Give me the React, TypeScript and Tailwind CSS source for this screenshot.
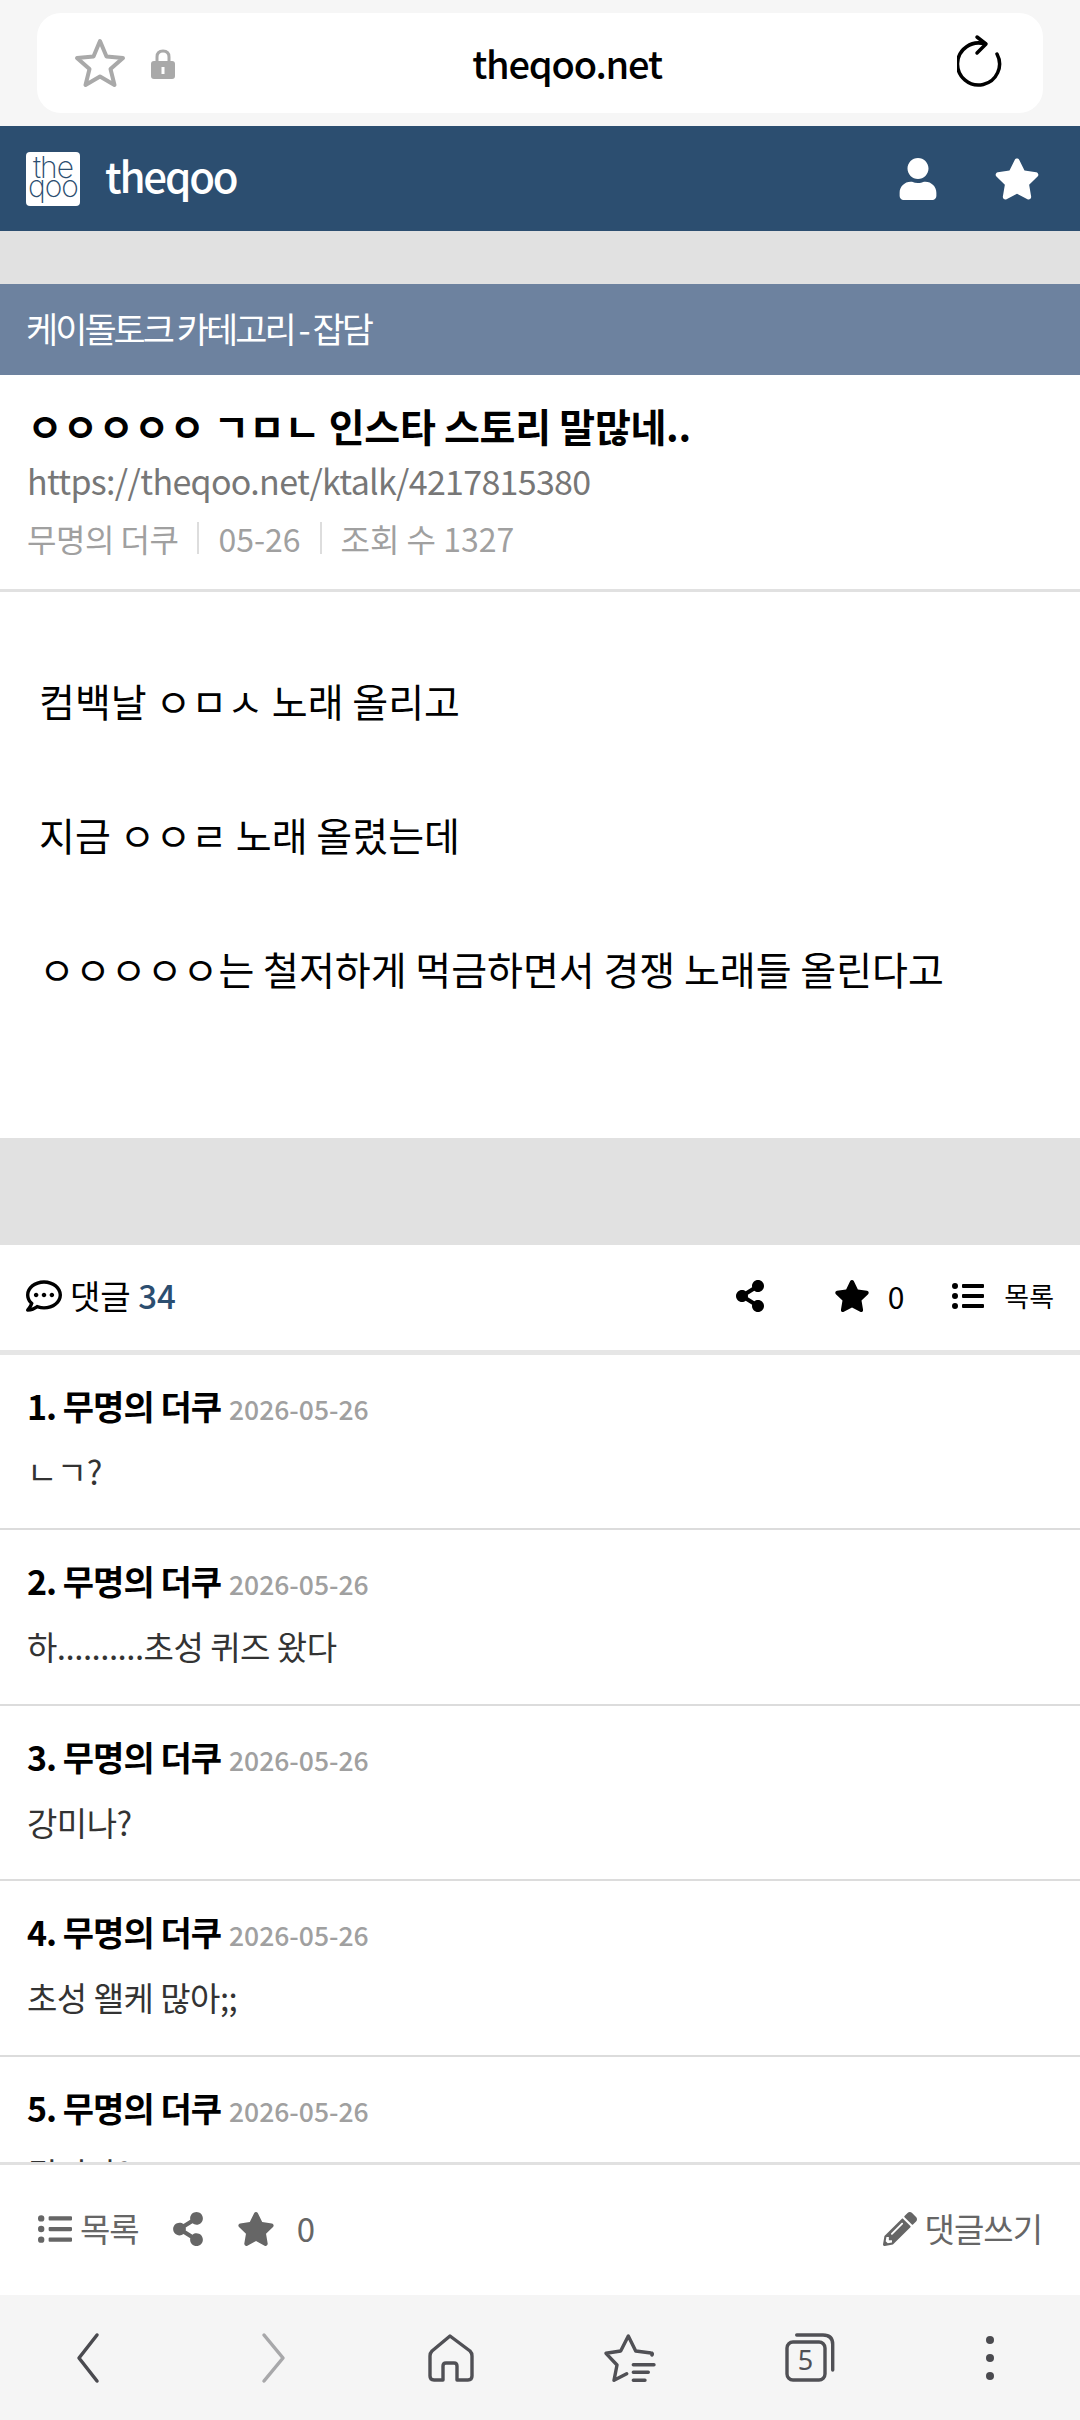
import { FaListUl, FaPencilAlt, FaRegCommentDots, FaShareAlt, FaStar, FaUser } from "react-icons/fa";

const font = "font-['Noto_Sans_CJK_KR','Noto_Sans',sans-serif]";

const comments = [
  { no: 1, body: "ㄴㄱ?" },
  { no: 2, body: "하..........초성 퀴즈 왔다" },
  { no: 3, body: "강미나?" },
  { no: 4, body: "초성 왤케 많아;;" },
  { no: 5, body: "권미나?" },
];

const TheqooLogo = () => (
  <svg width="54" height="54" viewBox="0 0 54 54">
    <rect width="54" height="54" rx="4" fill="#fff" />
    <g fontFamily="Inter, sans-serif" fontWeight="200" fontSize="30" fill="#2c4e70" textAnchor="middle">
      <text x="27" y="26" letterSpacing="-1">the</text>
      <text x="27" y="45" letterSpacing="-1">qoo</text>
    </g>
  </svg>
);

const BrowserNav = () => (
  <nav className="grid h-[125px] shrink-0 grid-cols-6 place-items-center bg-[#f5f5f5]">
    <svg width="32" height="52" viewBox="0 0 32 52" fill="none" stroke="#4a4a4f" strokeWidth="3.5" strokeLinecap="round" strokeLinejoin="round">
      <path d="M23 3 L5 26 L23 49" />
    </svg>
    <svg className="ml-[6px]" width="32" height="52" viewBox="0 0 32 52" fill="none" stroke="#a8a8aa" strokeWidth="3.5" strokeLinecap="round" strokeLinejoin="round">
      <path d="M7 3 L26 26 L7 49" />
    </svg>
    <svg className="ml-[2px]" width="46" height="48" viewBox="28 13 46 48" fill="none" stroke="#505055" strokeWidth="3.4" strokeLinecap="round" strokeLinejoin="round">
      <path d="M50 15 L70 30 Q72 32 72 35 V55 Q72 59 68 59 H57 V45 Q57 42 54 42 H46 Q43 42 43 45 V59 H34 Q30 59 30 55 V35 Q30 32 32 30 Z" />
    </svg>
    <svg width="52" height="48" viewBox="205 13 52 48" fill="none" stroke="#505055" strokeWidth="3.4" strokeLinecap="round" strokeLinejoin="round">
      <path d="M253 34 Q254 32 252 32 L236.7 30 L229.3 15 L221.7 30 L207 32.3 L218 44 L215 59.3 L227.7 52.7" />
      <path d="M234.3 43.7 H255 M234.3 51.3 H249.3 M234.3 59.3 H246" />
    </svg>
    <svg width="52" height="50" viewBox="4 12 52 50" fill="none" stroke="#505055" strokeWidth="3.4" strokeLinecap="round">
      <path d="M16.7 14 H43 Q52.7 14 52.7 23.3 V49" />
      <rect x="7" y="21" width="38" height="38" rx="6" />
      <text x="25.5" y="49" textAnchor="middle" fontSize="27" fontFamily="Noto Sans, sans-serif" fill="#505055" stroke="none">5</text>
    </svg>
    <div className="flex h-[44px] flex-col justify-between">
      <span className="h-[8px] w-[8px] rounded-full bg-[#4a4a4f]" />
      <span className="h-[8px] w-[8px] rounded-full bg-[#4a4a4f]" />
      <span className="h-[8px] w-[8px] rounded-full bg-[#4a4a4f]" />
    </div>
  </nav>
);

export default function App() {
  return (
    <div className={`${font} flex h-[2420px] w-[1080px] flex-col overflow-hidden bg-white`}>
      {/* browser address bar */}
      <div className="flex h-[126px] shrink-0 items-start bg-[#f6f6f6] px-[37px] pt-[13px]">
        <div className="relative flex h-[100px] w-full items-center justify-center rounded-[24px] bg-white pl-[54px]">
          <svg className="absolute left-[37px] top-[25px]" width="52" height="50" viewBox="0 0 52 50" fill="none" stroke="#a9a9a9" strokeWidth="4" strokeLinejoin="round">
            <path d="M26 3 L32.5 18.5 L49 20 L36.5 31 L40.5 47 L26 38.5 L11.5 47 L15.5 31 L3 20 L19.5 18.5 Z" />
          </svg>
          <svg className="absolute left-[113px] top-[36px]" width="26" height="30" viewBox="0 0 26 30" fill="none">
            <path d="M7 13 V8 Q7 2 13 2 Q19 2 19 8 V13" stroke="#a9a9a9" strokeWidth="3" />
            <rect x="1" y="12" width="24" height="18" rx="3" fill="#a9a9a9" />
            <rect x="11.5" y="18" width="3" height="7" fill="#fff" />
          </svg>
          <span className="text-[38px] font-medium leading-none tracking-[-1.2px] text-black">theqoo.net</span>
          <svg className="absolute right-[40px] top-[21px]" width="46" height="54" viewBox="0 0 46 54" fill="none" stroke="#000" strokeWidth="3.5" strokeLinecap="round" strokeLinejoin="round">
            <path d="M40 20 A21 21 0 1 1 28 10" />
            <path d="M20 3 L29 10 L20 19" />
          </svg>
        </div>
      </div>

      {/* site header */}
      <header className="flex h-[105px] shrink-0 items-center justify-between bg-[#2c4e70] pl-[26px] pr-[40px]">
        <div className="flex items-center gap-[25px]">
          <TheqooLogo />
          <span className="pb-[8px] text-[42px] font-medium leading-none tracking-[-2.2px] text-white">theqoo</span>
        </div>
        <div className="flex items-center gap-[56px] text-white">
          <FaUser className="h-[42px] w-[40px]" />
          <FaStar className="h-[44px] w-[46px]" />
        </div>
      </header>

      <div className="h-[53px] shrink-0 bg-[#e1e1e1]" />

      <main className="min-h-0 flex-1 overflow-hidden">
        <div className="flex h-[91px] items-center bg-[#6d829f] px-[26px] pb-[2px] text-[35px] tracking-[-3px] text-white">
          케이돌토크 카테고리 - 잡담
        </div>

        <section className="h-[217px] border-b-[3px] border-[#e1e1e1] px-[27px] pt-[23px]">
          <h1 className="text-[39px] font-bold leading-[54px] tracking-[-0.3px] text-black">ㅇㅇㅇㅇㅇ ㄱㅁㄴ 인스타 스토리 말많네..</h1>
          <p className="text-[34px] leading-[58px] tracking-[-0.7px] text-[#777]">https://theqoo.net/ktalk/4217815380</p>
          <div className="flex items-center text-[32px] leading-[56px] text-[#a0a0a0]">
            <span className="tracking-[-0.5px]">무명의 더쿠</span>
            <span className="mx-[19px] h-[32px] w-[2px] bg-[#ddd]" />
            <span>05-26</span>
            <span className="mx-[19px] h-[32px] w-[2px] bg-[#ddd]" />
            <span>조회 수 1327</span>
          </div>
        </section>

        <article className="flex h-[546px] flex-col gap-[85px] bg-white pl-[39px] pt-[84px] text-[39px] leading-[49px] text-black">
          <p>컴백날 ㅇㅁㅅ 노래 올리고</p>
          <p>지금 ㅇㅇㄹ 노래 올렸는데</p>
          <p>ㅇㅇㅇㅇㅇ는 철저하게 먹금하면서 경쟁 노래들 올린다고</p>
        </article>

        <div className="h-[107px] bg-[#e1e1e1]" />

        <div className="flex h-[110px] items-center justify-between border-b-[5px] border-[#e6e6e6] px-[26px] pb-[3px] text-[33px] text-black">
          <div className="flex items-center gap-[8px]">
            <FaRegCommentDots className="h-[36px] w-[36px]" />
            <span>댓글 <span className="font-medium text-[#2c4e70]">34</span></span>
          </div>
          <div className="flex items-center">
            <FaShareAlt className="mr-[68px] h-[32px] w-[32px]" />
            <FaStar className="mr-[18px] h-[34px] w-[36px]" />
            <span className="mr-[48px] text-[30px]">0</span>
            <FaListUl className="mr-[20px] h-[32px] w-[32px]" />
            <span className="text-[27px]">목록</span>
          </div>
        </div>

        {comments.map((c) => (
          <div key={c.no} className="h-[175.4px] border-b-2 border-[#dcdcdc] px-[27px] pt-[26px]">
            <div className="flex items-baseline gap-[8px] leading-[50px]">
              <span className="text-[34px] font-bold tracking-[-1px] text-black">{c.no}. 무명의 더쿠</span>
              <span className="text-[26.5px] font-medium text-[#a0a0a0]">2026-05-26</span>
            </div>
            <p className="mt-[12px] text-[33px] leading-[50px] tracking-[-0.5px] text-[#333]">{c.body}</p>
          </div>
        ))}
      </main>

      {/* sticky action bar */}
      <div className="flex h-[133px] shrink-0 items-center justify-between border-t-[3px] border-[#e1e1e1] bg-white px-[38px] pb-[3px] text-[33px] text-[#666]">
        <div className="flex items-center">
          <FaListUl className="mr-[8px] h-[34px] w-[34px]" />
          <span className="mr-[34px] tracking-[-1px]">목록</span>
          <FaShareAlt className="mr-[34px] h-[34px] w-[30px]" />
          <FaStar className="mr-[22px] h-[36px] w-[38px]" />
          <span>0</span>
        </div>
        <div className="flex items-center">
          <FaPencilAlt className="mr-[8px] h-[34px] w-[34px]" />
          <span className="tracking-[-1px]">댓글쓰기</span>
        </div>
      </div>

      <BrowserNav />
    </div>
  );
}
